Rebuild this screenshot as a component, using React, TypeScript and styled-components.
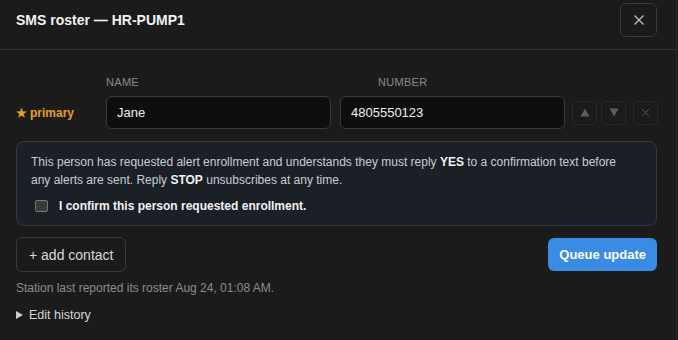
import React from 'react';
import styled, { createGlobalStyle } from 'styled-components';

const Global = createGlobalStyle`
  html, body {
    margin: 0;
    padding: 0;
    background: #141414;
  }
  body {
    font-family: "Liberation Sans", Arial, sans-serif;
    color: #e6e6e6;
  }
  * { box-sizing: border-box; }
`;

const Modal = styled.div`
  width: 677px;
  height: 340px;
  background: #1b1b1b;
  border-right: 1px solid #2c2c2c;
`;

const Header = styled.header`
  display: flex;
  justify-content: space-between;
  align-items: center;
  height: 50px;
  padding: 3px 19px 13px 16px;
  border-bottom: 1px solid #333;
  h2 {
    margin: 0;
    font-size: 14px;
    font-weight: 700;
    color: #f2f2f2;
  }
`;

const CloseBtn = styled.button`
  width: 37px;
  height: 34px;
  background: transparent;
  border: 1px solid #3a3a3a;
  border-radius: 6px;
  color: #bdbdbd;
  display: flex;
  align-items: center;
  justify-content: center;
  padding: 0;
`;

const Body = styled.div`
  padding: 26px 19px 0 16px;
`;

const Labels = styled.div`
  display: flex;
  padding-left: 90px;
  font-size: 11px;
  letter-spacing: 0.3px;
  color: #8a8a8a;
  text-transform: uppercase;
  span:first-child { width: 272px; }
`;

const Row = styled.div`
  display: flex;
  align-items: center;
  margin-top: 8px;
  height: 33px;
`;

const Primary = styled.div`
  width: 90px;
  flex: none;
  color: #e3a21a;
  font-size: 12px;
  font-weight: 700;
  display: flex;
  align-items: center;
  gap: 3px;
`;

const Input = styled.input<{ $after?: number }>`
  width: 225px;
  flex: none;
  height: 33px;
  background: #0e0e0e;
  border: 1px solid #3a3a3a;
  border-radius: 6px;
  color: #f0f0f0;
  font-family: inherit;
  font-size: 13px;
  padding: 0 10px;
  margin-right: ${(p) => p.$after ?? 9}px;
  outline: none;
`;

const IconBtn = styled.button<{ $gap?: number }>`
  width: 25px;
  flex: none;
  height: 24px;
  margin-left: ${(p) => p.$gap ?? 0}px;
  background: transparent;
  border: 1px solid #2a2a2a;
  border-radius: 5px;
  color: #5a5a5a;
  display: flex;
  align-items: center;
  justify-content: center;
  padding: 0;
`;

const Notice = styled.div`
  margin-top: 12px;
  background: #1b1f26;
  border: 1px solid #343a43;
  border-radius: 8px;
  padding: 11px 36px 10px 14px;
  font-size: 12px;
  line-height: 18px;
  color: #c9cdd3;
  p { margin: 0; }
  b { color: #f2f2f2; }
`;

const Confirm = styled.label`
  display: flex;
  align-items: center;
  gap: 11px;
  margin-top: 8px;
  margin-left: 4px;
  font-size: 12px;
  font-weight: 700;
  color: #f2f2f2;
  input {
    appearance: none;
    width: 13px;
    height: 12px;
    margin: 0;
    border: 1px solid #777;
    border-radius: 2px;
    background: #3a3a3a;
  }
`;

const Actions = styled.div`
  display: flex;
  justify-content: space-between;
  align-items: center;
  margin-top: 11px;
`;

const GhostBtn = styled.button`
  height: 35px;
  padding: 0 12px;
  background: transparent;
  border: 1px solid #3a3a3a;
  border-radius: 6px;
  color: #d8d8d8;
  font-family: inherit;
  font-size: 14px;
`;

const PrimaryBtn = styled.button`
  height: 33px;
  padding: 0 11px;
  background: #3a8be4;
  border: none;
  border-radius: 6px;
  color: #fff;
  font-family: inherit;
  font-size: 13px;
  font-weight: 700;
`;

const Meta = styled.div`
  margin-top: 9px;
  font-size: 12px;
  color: #8c8c8c;
`;

const History = styled.div`
  margin-top: 13px;
  display: flex;
  align-items: center;
  gap: 6px;
  font-size: 12.5px;
  color: #d6d6d6;
`;

const X = ({ size, color }: { size: number; color: string }) => (
  <svg width={size} height={size} viewBox="0 0 12 12" fill="none" stroke={color} strokeWidth="1.3">
    <path d="M1.5 1.5l9 9M10.5 1.5l-9 9" />
  </svg>
);

const Tri = ({ dir }: { dir: 'up' | 'down' }) => (
  <svg width="10" height="9" viewBox="0 0 10 9" fill="#5c5c5c">
    {dir === 'up' ? <path d="M5 0.5L9.5 8.5H0.5Z" /> : <path d="M0.5 0.5H9.5L5 8.5Z" />}
  </svg>
);

export default function App() {
  return (
    <>
      <Global />
      <Modal>
        <Header>
          <h2>SMS roster — HR-PUMP1</h2>
          <CloseBtn aria-label="close">
            <X size={12} color="#bfbfbf" />
          </CloseBtn>
        </Header>
        <Body>
          <Labels>
            <span>Name</span>
            <span>Number</span>
          </Labels>
          <Row>
            <Primary>
              <span>★</span>
              <span>primary</span>
            </Primary>
            <Input defaultValue="Jane" />
            <Input defaultValue="4805550123" $after={7} />
            <IconBtn><Tri dir="up" /></IconBtn>
            <IconBtn $gap={4}><Tri dir="down" /></IconBtn>
            <IconBtn $gap={7}><X size={9} color="#5c5c5c" /></IconBtn>
          </Row>
          <Notice>
            <p>
              This person has requested alert enrollment and understands they must reply <b>YES</b> to a confirmation text before
              any alerts are sent. Reply <b>STOP</b> unsubscribes at any time.
            </p>
            <Confirm>
              <input type="checkbox" />
              I confirm this person requested enrollment.
            </Confirm>
          </Notice>
          <Actions>
            <GhostBtn>+ add contact</GhostBtn>
            <PrimaryBtn>Queue update</PrimaryBtn>
          </Actions>
          <Meta>Station last reported its roster Aug 24, 01:08 AM.</Meta>
          <History>
            <svg width="7" height="8" viewBox="0 0 7 8" fill="#cfcfcf">
              <path d="M0 0L7 4L0 8Z" />
            </svg>
            Edit history
          </History>
        </Body>
      </Modal>
    </>
  );
}
